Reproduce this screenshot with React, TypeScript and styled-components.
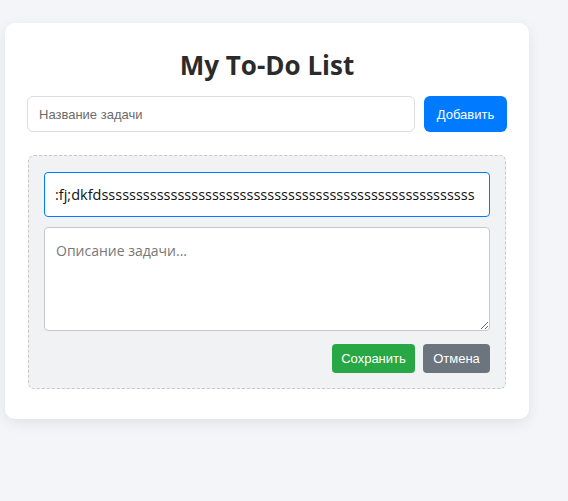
import React, { useState } from "react";
import styled, { createGlobalStyle } from "styled-components";

const Global = createGlobalStyle`
  html, body { margin: 0; padding: 0; }
  body {
    background: #f4f5f8;
    font-family: "Open Sans", "Noto Sans", sans-serif;
    width: 568px;
    height: 501px;
    overflow: hidden;
  }
`;

const Page = styled.div`
  padding: 23px 0 0 5px;
`;

const Card = styled.div`
  width: 524px;
  box-sizing: border-box;
  background: #ffffff;
  border-radius: 10px;
  box-shadow: 0 4px 14px rgba(0, 0, 0, 0.08);
  padding: 24px 22px 30px;
`;

const Title = styled.h1`
  margin: 0 0 12px;
  text-align: center;
  font-family: "Open Sans", "Noto Sans", sans-serif;
  font-weight: 700;
  font-size: 26px;
  line-height: 37px;
  color: #2b2b2b;
`;

const AddRow = styled.div`
  display: flex;
  gap: 9px;
  margin-bottom: 23px;
`;

const NameInput = styled.input`
  flex: 1;
  height: 36px;
  box-sizing: border-box;
  border: 1px solid #dcdcdc;
  border-radius: 6px;
  padding: 0 11px;
  font-family: "Liberation Sans", Arial, sans-serif;
  font-size: 13px;
  color: #333;
  outline: none;
  &::placeholder { color: #6b6b6b; }
`;

const Btn = styled.button<{ $bg: string; $w: number; $h: number; $r: number }>`
  width: ${(p) => p.$w}px;
  height: ${(p) => p.$h}px;
  border: none;
  border-radius: ${(p) => p.$r}px;
  background: ${(p) => p.$bg};
  color: #fff;
  font-family: "Liberation Sans", Arial, sans-serif;
  font-size: 13px;
  padding: 0;
  cursor: pointer;
`;

const EditBox = styled.div`
  margin: 0 1px;
  border: 1px dashed #c8c8c8;
  border-radius: 6px;
  background: #f1f2f4;
  padding: 16px 15px 15px;
  display: flex;
  flex-direction: column;
`;

const TitleEdit = styled.input`
  height: 45px;
  box-sizing: border-box;
  border: 1px solid #007bff;
  border-radius: 4px;
  padding: 0 12px 0 10px;
  font-family: "Open Sans", "Noto Sans", sans-serif;
  font-size: 14.5px;
  color: #111;
  outline: none;
  background: #fff;
  margin-bottom: 10px;
`;

const DescEdit = styled.textarea`
  height: 104px;
  box-sizing: border-box;
  border: 1px solid #c8c8c8;
  border-radius: 4px;
  padding: 13px 11px;
  font-family: "Open Sans", "Noto Sans", sans-serif;
  font-size: 14px;
  resize: vertical;
  outline: none;
  margin-bottom: 13px;
  &::placeholder { color: #777; }
`;

const Actions = styled.div`
  display: flex;
  justify-content: flex-end;
  gap: 8px;
`;

export default function App() {
  const [title, setTitle] = useState(":fj;dkfd" + "s".repeat(54));
  return (
    <>
      <Global />
      <Page>
        <Card>
          <Title>My To-Do List</Title>
          <AddRow>
            <NameInput placeholder="Название задачи" />
            <Btn $bg="#007bff" $w={83} $h={36} $r={6}>Добавить</Btn>
          </AddRow>
          <EditBox>
            <TitleEdit value={title} onChange={(e) => setTitle(e.target.value)} />
            <DescEdit placeholder="Описание задачи..." />
            <Actions>
              <Btn $bg="#28a745" $w={83} $h={29} $r={4}>Сохранить</Btn>
              <Btn $bg="#6c757d" $w={67} $h={29} $r={4}>Отмена</Btn>
            </Actions>
          </EditBox>
        </Card>
      </Page>
    </>
  );
}
